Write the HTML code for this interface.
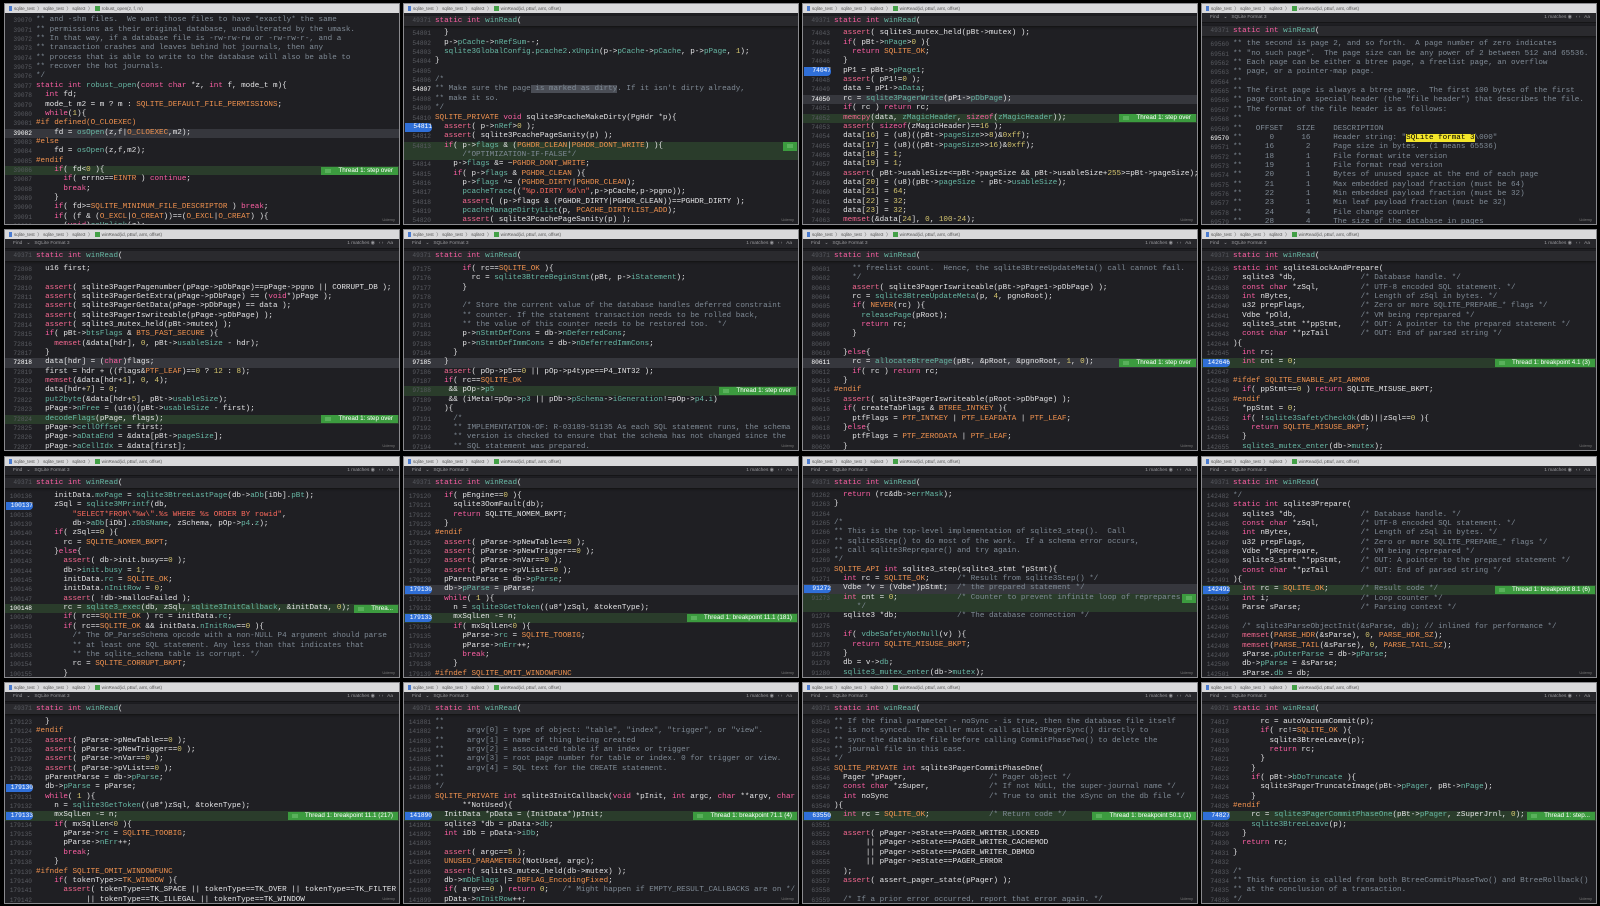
<!DOCTYPE html>
<html><head><meta charset="utf-8">
<style>
*{margin:0;padding:0;box-sizing:border-box}
html,body{width:1600px;height:906px;background:#000;overflow:hidden}
.p{position:absolute;width:396px;height:222px;background:#1f1f23;border:1px solid #8a8a8e;overflow:hidden;font-family:"Liberation Mono",monospace;font-size:7.6px;color:#e2e2e4}
.tb{position:absolute;left:0;right:0;top:0;height:9px;background:#d9d9db;font:4.6px "Liberation Sans",sans-serif;color:#555;line-height:9px;padding-left:4px;white-space:pre}
.tb b{display:inline-block;width:5px;height:5px;background:#43a047;vertical-align:middle;margin:0 2px}
.tb u{text-decoration:none;display:inline-block;width:3px;height:5px;background:#4a7bd0;vertical-align:middle;margin-right:2px}
.fd{position:absolute;left:0;right:0;top:9px;height:10px;background:#26262a;border-bottom:1px solid #151517;font:4.8px "Liberation Sans",sans-serif;color:#9a9a9e;line-height:10px;padding-left:8px;white-space:pre}
.fd span{position:absolute;right:6px;top:0}
.st{position:absolute;left:0;right:0;height:10px;background:#2a2a2e;line-height:10px;padding-left:31px;white-space:pre;z-index:2;box-shadow:0 1px 2px #111}
.st i{position:absolute;left:0;width:27px;text-align:right;font-style:normal;color:#55575d;font-size:6.2px}
.cd{position:absolute;left:0;right:0}
.l{position:relative;height:9.36px;line-height:9.36px;white-space:pre;padding-left:31px}
.l i{position:absolute;left:0;top:0;width:27px;text-align:right;font-style:normal;color:#585a60;font-size:6.2px}
.g{background:#2a3c2b}
.y{background:#36373d}
.y i{color:#fff}
.bl i{background:#2f6fd8;color:#fff;border-radius:0 4px 4px 0;left:1px;width:27px;height:8.5px;line-height:8.5px;top:.4px}
.bd{position:absolute;right:1px;top:.5px;height:8.4px;line-height:8.4px;background:#3c9b3f;color:#fff;font:6.3px "Liberation Sans",sans-serif;padding:0 5px 0 17px}
.bd:before{content:"";position:absolute;left:4px;top:2.2px;width:6px;height:4px;background:#6cc06e;opacity:.6}
.ud{position:absolute;right:4px;bottom:2px;font:4px "Liberation Sans",sans-serif;color:#777}
.k{color:#fc5fa3}.c{color:#7f8a95}.f{color:#67b7a4}.m{color:#f0924f}.n{color:#d6c66f}.s{color:#fc6a5d}.a{color:#f2678f}
.hl{background:#f4e62a;color:#000}.sel{background:#4a4d55}
</style></head><body>

<!-- ROW 1 -->
<div class="p" style="left:4px;top:3px">
<div class="tb"><u></u>sqlite_test  〉 sqlite_test  〉 sqlite3  〉<b></b>robust_open(z, f, m)</div>
<div class="cd" style="top:12.3px">
<div class="l c"><i>39070</i>** and -shm files.  We want those files to have *exactly* the same</div>
<div class="l c"><i>39071</i>** permissions as their original database, unadulterated by the umask.</div>
<div class="l c"><i>39072</i>** In that way, if a database file is -rw-rw-rw or -rw-rw-r-, and a</div>
<div class="l c"><i>39073</i>** transaction crashes and leaves behind hot journals, then any</div>
<div class="l c"><i>39074</i>** process that is able to write to the database will also be able to</div>
<div class="l c"><i>39075</i>** recover the hot journals.</div>
<div class="l c"><i>39076</i>*/</div>
<div class="l"><i>39077</i><span class="k">static int</span> <span class="f">robust_open</span>(<span class="k">const char</span> *z, <span class="k">int</span> f, mode_t m){</div>
<div class="l"><i>39078</i>  <span class="k">int</span> fd;</div>
<div class="l"><i>39079</i>  mode_t m2 = m ? m : <span class="m">SQLITE_DEFAULT_FILE_PERMISSIONS</span>;</div>
<div class="l"><i>39080</i>  <span class="k">while</span>(<span class="n">1</span>){</div>
<div class="l"><i>39081</i><span class="m">#if defined(O_CLOEXEC)</span></div>
<div class="l y"><i>39082</i>    fd = <span class="f">osOpen</span>(z,f|<span class="m">O_CLOEXEC</span>,m2);</div>
<div class="l"><i>39083</i><span class="m">#else</span></div>
<div class="l"><i>39084</i>    fd = <span class="f">osOpen</span>(z,f,m2);</div>
<div class="l"><i>39085</i><span class="m">#endif</span></div>
<div class="l g"><i>39086</i>    <span class="k">if</span>( fd&lt;<span class="n">0</span> ){<span class="bd">Thread 1: step over</span></div>
<div class="l"><i>39087</i>      <span class="k">if</span>( errno==<span class="m">EINTR</span> ) <span class="k">continue</span>;</div>
<div class="l"><i>39088</i>      <span class="k">break</span>;</div>
<div class="l"><i>39089</i>    }</div>
<div class="l"><i>39090</i>    <span class="k">if</span>( fd&gt;=<span class="m">SQLITE_MINIMUM_FILE_DESCRIPTOR</span> ) <span class="k">break</span>;</div>
<div class="l"><i>39091</i>    <span class="k">if</span>( (f &amp; (<span class="m">O_EXCL</span>|<span class="m">O_CREAT</span>))==(<span class="m">O_EXCL</span>|<span class="m">O_CREAT</span>) ){</div>
<div class="l"><i>39092</i>      (<span class="k">void</span>)<span class="f">osUnlink</span>(z);</div>
</div><div class="ud">Udemy</div></div>

<div class="p" style="left:403px;top:3px">
<div class="tb"><u></u>sqlite_test  〉 sqlite_test  〉 sqlite3  〉<b></b>winRead(id, pBuf, amt, offset)</div>
<div class="st" style="top:12px"><i>49371</i><span class="k">static int</span> <span class="f">winRead</span>(</div>
<div class="cd" style="top:25.3px">
<div class="l"><i>54801</i>  }</div>
<div class="l"><i>54802</i>  p-&gt;<span class="f">pCache</span>-&gt;<span class="f">nRefSum</span>--;</div>
<div class="l"><i>54803</i>  <span class="f">sqlite3GlobalConfig</span>.<span class="f">pcache2</span>.<span class="f">xUnpin</span>(p-&gt;<span class="f">pCache</span>-&gt;<span class="f">pCache</span>, p-&gt;<span class="f">pPage</span>, <span class="n">1</span>);</div>
<div class="l"><i>54804</i>}</div>
<div class="l"><i>54805</i></div>
<div class="l c"><i>54806</i>/*</div>
<div class="l c"><i style="color:#fff">54807</i>** Make sure the page<span class="sel"> is marked as dirty</span>. If it isn't dirty already,</div>
<div class="l c"><i>54808</i>** make it so.</div>
<div class="l c"><i>54809</i>*/</div>
<div class="l"><i>54810</i><span class="m">SQLITE_PRIVATE</span> <span class="k">void</span> sqlite3PcacheMakeDirty(PgHdr *p){</div>
<div class="l bl"><i>54811</i>  <span class="a">assert</span>( p-&gt;<span class="f">nRef</span>&gt;<span class="n">0</span> );</div>
<div class="l"><i>54812</i>  <span class="a">assert</span>( sqlite3PcachePageSanity(p) );</div>
<div class="l g"><i>54813</i>  <span class="k">if</span>( p-&gt;<span class="f">flags</span> &amp; (<span class="m">PGHDR_CLEAN</span>|<span class="m">PGHDR_DONT_WRITE</span>) ){<span class="bd" style="padding:0 6px">&nbsp;</span></div>
<div class="l g c"><i></i>      /*OPTIMIZATION-IF-FALSE*/</div>
<div class="l"><i>54814</i>    p-&gt;<span class="f">flags</span> &amp;= ~<span class="m">PGHDR_DONT_WRITE</span>;</div>
<div class="l"><i>54815</i>    <span class="k">if</span>( p-&gt;<span class="f">flags</span> &amp; <span class="m">PGHDR_CLEAN</span> ){</div>
<div class="l"><i>54816</i>      p-&gt;<span class="f">flags</span> ^= (<span class="m">PGHDR_DIRTY</span>|<span class="m">PGHDR_CLEAN</span>);</div>
<div class="l"><i>54817</i>      <span class="f">pcacheTrace</span>((<span class="s">"%p.DIRTY %d\n"</span>,p-&gt;pCache,p-&gt;pgno));</div>
<div class="l"><i>54818</i>      <span class="a">assert</span>( (p-&gt;flags &amp; (PGHDR_DIRTY|PGHDR_CLEAN))==PGHDR_DIRTY );</div>
<div class="l"><i>54819</i>      <span class="f">pcacheManageDirtyList</span>(p, <span class="m">PCACHE_DIRTYLIST_ADD</span>);</div>
<div class="l"><i>54820</i>      <span class="a">assert</span>( sqlite3PcachePageSanity(p) );</div>
</div><div class="ud">Udemy</div></div>

<div class="p" style="left:802px;top:3px">
<div class="tb"><u></u>sqlite_test  〉 sqlite_test  〉 sqlite3  〉<b></b>winRead(id, pBuf, amt, offset)</div>
<div class="st" style="top:12px"><i>49371</i><span class="k">static int</span> <span class="f">winRead</span>(</div>
<div class="cd" style="top:25.3px">
<div class="l"><i>74043</i>  <span class="a">assert</span>( sqlite3_mutex_held(pBt-&gt;mutex) );</div>
<div class="l"><i>74044</i>  <span class="k">if</span>( pBt-&gt;<span class="f">nPage</span>&gt;<span class="n">0</span> ){</div>
<div class="l"><i>74045</i>    <span class="k">return</span> <span class="m">SQLITE_OK</span>;</div>
<div class="l"><i>74046</i>  }</div>
<div class="l bl"><i>74047</i>  pP1 = pBt-&gt;<span class="f">pPage1</span>;</div>
<div class="l"><i>74048</i>  <span class="a">assert</span>( pP1!=<span class="n">0</span> );</div>
<div class="l"><i>74049</i>  data = pP1-&gt;<span class="f">aData</span>;</div>
<div class="l y"><i>74050</i>  rc = <span class="f">sqlite3PagerWrite</span>(pP1-&gt;<span class="f">pDbPage</span>);</div>
<div class="l"><i>74051</i>  <span class="k">if</span>( rc ) <span class="k">return</span> rc;</div>
<div class="l g"><i>74052</i>  <span class="a">memcpy</span>(data, <span class="f">zMagicHeader</span>, <span class="k">sizeof</span>(<span class="f">zMagicHeader</span>));<span class="bd">Thread 1: step over</span></div>
<div class="l"><i>74053</i>  <span class="a">assert</span>( <span class="k">sizeof</span>(zMagicHeader)==<span class="n">16</span> );</div>
<div class="l"><i>74054</i>  data[<span class="n">16</span>] = (u8)((pBt-&gt;<span class="f">pageSize</span>&gt;&gt;<span class="n">8</span>)&amp;<span class="n">0xff</span>);</div>
<div class="l"><i>74055</i>  data[<span class="n">17</span>] = (u8)((pBt-&gt;<span class="f">pageSize</span>&gt;&gt;<span class="n">16</span>)&amp;<span class="n">0xff</span>);</div>
<div class="l"><i>74056</i>  data[<span class="n">18</span>] = <span class="n">1</span>;</div>
<div class="l"><i>74057</i>  data[<span class="n">19</span>] = <span class="n">1</span>;</div>
<div class="l"><i>74058</i>  <span class="a">assert</span>( pBt-&gt;usableSize&lt;=pBt-&gt;pageSize &amp;&amp; pBt-&gt;usableSize+<span class="n">255</span>&gt;=pBt-&gt;pageSize);</div>
<div class="l"><i>74059</i>  data[<span class="n">20</span>] = (u8)(pBt-&gt;<span class="f">pageSize</span> - pBt-&gt;<span class="f">usableSize</span>);</div>
<div class="l"><i>74060</i>  data[<span class="n">21</span>] = <span class="n">64</span>;</div>
<div class="l"><i>74061</i>  data[<span class="n">22</span>] = <span class="n">32</span>;</div>
<div class="l"><i>74062</i>  data[<span class="n">23</span>] = <span class="n">32</span>;</div>
<div class="l"><i>74063</i>  <span class="a">memset</span>(&amp;data[<span class="n">24</span>], <span class="n">0</span>, <span class="n">100</span>-<span class="n">24</span>);</div>
</div><div class="ud">Udemy</div></div>

<div class="p" style="left:1201px;top:3px">
<div class="tb"><u></u>sqlite_test  〉 sqlite_test  〉 sqlite3  〉<b></b>winRead(id, pBuf, amt, offset)</div>
<div class="fd">Find   ⌄   SQLite Format 3<span>1 matches ◉   ‹ ›   Aa</span></div>
<div class="st" style="top:22px"><i>49371</i><span class="k">static int</span> <span class="f">winRead</span>(</div>
<div class="cd c" style="top:36.3px">
<div class="l"><i>69560</i>** the second is page 2, and so forth.  A page number of zero indicates</div>
<div class="l"><i>69561</i>** "no such page".  The page size can be any power of 2 between 512 and 65536.</div>
<div class="l"><i>69562</i>** Each page can be either a btree page, a freelist page, an overflow</div>
<div class="l"><i>69563</i>** page, or a pointer-map page.</div>
<div class="l"><i>69564</i>**</div>
<div class="l"><i>69565</i>** The first page is always a btree page.  The first 100 bytes of the first</div>
<div class="l"><i>69566</i>** page contain a special header (the "file header") that describes the file.</div>
<div class="l"><i>69567</i>** The format of the file header is as follows:</div>
<div class="l"><i>69568</i>**</div>
<div class="l"><i>69569</i>**   OFFSET   SIZE    DESCRIPTION</div>
<div class="l"><i style="color:#fff">69570</i>**      0      16     Header string: "<span class="hl">SQLite format 3</span>\000"</div>
<div class="l"><i>69571</i>**     16       2     Page size in bytes.  (1 means 65536)</div>
<div class="l"><i>69572</i>**     18       1     File format write version</div>
<div class="l"><i>69573</i>**     19       1     File format read version</div>
<div class="l"><i>69574</i>**     20       1     Bytes of unused space at the end of each page</div>
<div class="l"><i>69575</i>**     21       1     Max embedded payload fraction (must be 64)</div>
<div class="l"><i>69576</i>**     22       1     Min embedded payload fraction (must be 32)</div>
<div class="l"><i>69577</i>**     23       1     Min leaf payload fraction (must be 32)</div>
<div class="l"><i>69578</i>**     24       4     File change counter</div>
<div class="l"><i>69579</i>**     28       4     The size of the database in pages</div>
</div><div class="ud">Udemy</div></div>

<!-- ROW 2 -->
<div class="p" style="left:4px;top:229px">
<div class="tb"><u></u>sqlite_test  〉 sqlite_test  〉 sqlite3  〉<b></b>winRead(id, pBuf, amt, offset)</div>
<div class="fd">Find   ⌄   SQLite Format 3<span>1 matches ◉   ‹ ›   Aa</span></div>
<div class="st" style="top:21px"><i>49371</i><span class="k">static int</span> <span class="f">winRead</span>(</div>
<div class="cd" style="top:34.8px">
<div class="l"><i>72808</i>  u16 first;</div>
<div class="l"><i>72809</i></div>
<div class="l"><i>72810</i>  <span class="a">assert</span>( sqlite3PagerPagenumber(pPage-&gt;pDbPage)==pPage-&gt;pgno || CORRUPT_DB );</div>
<div class="l"><i>72811</i>  <span class="a">assert</span>( sqlite3PagerGetExtra(pPage-&gt;pDbPage) == (<span class="k">void</span>*)pPage );</div>
<div class="l"><i>72812</i>  <span class="a">assert</span>( sqlite3PagerGetData(pPage-&gt;pDbPage) == data );</div>
<div class="l"><i>72813</i>  <span class="a">assert</span>( sqlite3PagerIswriteable(pPage-&gt;pDbPage) );</div>
<div class="l"><i>72814</i>  <span class="a">assert</span>( sqlite3_mutex_held(pBt-&gt;mutex) );</div>
<div class="l"><i>72815</i>  <span class="k">if</span>( pBt-&gt;<span class="f">btsFlags</span> &amp; <span class="m">BTS_FAST_SECURE</span> ){</div>
<div class="l"><i>72816</i>    <span class="a">memset</span>(&amp;data[hdr], <span class="n">0</span>, pBt-&gt;<span class="f">usableSize</span> - hdr);</div>
<div class="l"><i>72817</i>  }</div>
<div class="l y"><i>72818</i>  data[hdr] = (<span class="k">char</span>)flags;</div>
<div class="l"><i>72819</i>  first = hdr + ((flags&amp;<span class="m">PTF_LEAF</span>)==<span class="n">0</span> ? <span class="n">12</span> : <span class="n">8</span>);</div>
<div class="l"><i>72820</i>  <span class="a">memset</span>(&amp;data[hdr+<span class="n">1</span>], <span class="n">0</span>, <span class="n">4</span>);</div>
<div class="l"><i>72821</i>  data[hdr+<span class="n">7</span>] = <span class="n">0</span>;</div>
<div class="l"><i>72822</i>  <span class="f">put2byte</span>(&amp;data[hdr+<span class="n">5</span>], pBt-&gt;<span class="f">usableSize</span>);</div>
<div class="l"><i>72823</i>  pPage-&gt;<span class="f">nFree</span> = (u16)(pBt-&gt;<span class="f">usableSize</span> - first);</div>
<div class="l g"><i>72824</i>  <span class="f">decodeFlags</span>(pPage, flags);<span class="bd">Thread 1: step over</span></div>
<div class="l"><i>72825</i>  pPage-&gt;<span class="f">cellOffset</span> = first;</div>
<div class="l"><i>72826</i>  pPage-&gt;<span class="f">aDataEnd</span> = &amp;data[pBt-&gt;<span class="f">pageSize</span>];</div>
<div class="l"><i>72827</i>  pPage-&gt;<span class="f">aCellIdx</span> = &amp;data[first];</div>
</div><div class="ud">Udemy</div></div>

<div class="p" style="left:403px;top:229px">
<div class="tb"><u></u>sqlite_test  〉 sqlite_test  〉 sqlite3  〉<b></b>winRead(id, pBuf, amt, offset)</div>
<div class="fd">Find   ⌄   SQLite Format 3<span>1 matches ◉   ‹ ›   Aa</span></div>
<div class="st" style="top:21px"><i>49371</i><span class="k">static int</span> <span class="f">winRead</span>(</div>
<div class="cd" style="top:34.8px">
<div class="l"><i>97175</i>      <span class="k">if</span>( rc==<span class="m">SQLITE_OK</span> ){</div>
<div class="l"><i>97176</i>        rc = <span class="f">sqlite3BtreeBeginStmt</span>(pBt, p-&gt;<span class="f">iStatement</span>);</div>
<div class="l"><i>97177</i>      }</div>
<div class="l"><i>97178</i></div>
<div class="l c"><i>97179</i>      /* Store the current value of the database handles deferred constraint</div>
<div class="l c"><i>97180</i>      ** counter. If the statement transaction needs to be rolled back,</div>
<div class="l c"><i>97181</i>      ** the value of this counter needs to be restored too.  */</div>
<div class="l"><i>97182</i>      p-&gt;<span class="f">nStmtDefCons</span> = db-&gt;<span class="f">nDeferredCons</span>;</div>
<div class="l"><i>97183</i>      p-&gt;<span class="f">nStmtDefImmCons</span> = db-&gt;<span class="f">nDeferredImmCons</span>;</div>
<div class="l"><i>97184</i>    }</div>
<div class="l y"><i>97185</i>  }</div>
<div class="l"><i>97186</i>  <span class="a">assert</span>( pOp-&gt;p5==<span class="n">0</span> || pOp-&gt;p4type==P4_INT32 );</div>
<div class="l"><i>97187</i>  <span class="k">if</span>( rc==<span class="m">SQLITE_OK</span></div>
<div class="l g"><i>97188</i>   &amp;&amp; pOp-&gt;<span class="f">p5</span><span class="bd" style="right:2px">Thread 1: step over</span></div>
<div class="l"><i>97189</i>   &amp;&amp; (iMeta!=pOp-&gt;<span class="f">p3</span> || pDb-&gt;<span class="f">pSchema</span>-&gt;<span class="f">iGeneration</span>!=pOp-&gt;<span class="f">p4</span>.<span class="f">i</span>)</div>
<div class="l"><i>97190</i>  ){</div>
<div class="l c"><i>97191</i>    /*</div>
<div class="l c"><i>97192</i>    ** IMPLEMENTATION-OF: R-03189-51135 As each SQL statement runs, the schema</div>
<div class="l c"><i>97193</i>    ** version is checked to ensure that the schema has not changed since the</div>
<div class="l c"><i>97194</i>    ** SQL statement was prepared.</div>
</div><div class="ud">Udemy</div></div>

<div class="p" style="left:802px;top:229px">
<div class="tb"><u></u>sqlite_test  〉 sqlite_test  〉 sqlite3  〉<b></b>winRead(id, pBuf, amt, offset)</div>
<div class="fd">Find   ⌄   SQLite Format 3<span>1 matches ◉   ‹ ›   Aa</span></div>
<div class="st" style="top:21px"><i>49371</i><span class="k">static int</span> <span class="f">winRead</span>(</div>
<div class="cd" style="top:34.8px">
<div class="l c"><i>80601</i>    ** freelist count.  Hence, the sqlite3BtreeUpdateMeta() call cannot fail.</div>
<div class="l c"><i>80602</i>    */</div>
<div class="l"><i>80603</i>    <span class="a">assert</span>( sqlite3PagerIswriteable(pBt-&gt;pPage1-&gt;pDbPage) );</div>
<div class="l"><i>80604</i>    rc = <span class="f">sqlite3BtreeUpdateMeta</span>(p, <span class="n">4</span>, pgnoRoot);</div>
<div class="l"><i>80605</i>    <span class="k">if</span>( <span class="m">NEVER</span>(rc) ){</div>
<div class="l"><i>80606</i>      <span class="f">releasePage</span>(pRoot);</div>
<div class="l"><i>80607</i>      <span class="k">return</span> rc;</div>
<div class="l"><i>80608</i>    }</div>
<div class="l"><i>80609</i></div>
<div class="l"><i>80610</i>  }<span class="k">else</span>{</div>
<div class="l y"><i>80611</i>    rc = <span class="f">allocateBtreePage</span>(pBt, &amp;pRoot, &amp;pgnoRoot, <span class="n">1</span>, <span class="n">0</span>);<span class="bd">Thread 1: step over</span></div>
<div class="l"><i>80612</i>    <span class="k">if</span>( rc ) <span class="k">return</span> rc;</div>
<div class="l"><i>80613</i>  }</div>
<div class="l"><i>80614</i><span class="m">#endif</span></div>
<div class="l"><i>80615</i>  <span class="a">assert</span>( sqlite3PagerIswriteable(pRoot-&gt;pDbPage) );</div>
<div class="l"><i>80616</i>  <span class="k">if</span>( createTabFlags &amp; <span class="m">BTREE_INTKEY</span> ){</div>
<div class="l"><i>80617</i>    ptfFlags = <span class="m">PTF_INTKEY</span> | <span class="m">PTF_LEAFDATA</span> | <span class="m">PTF_LEAF</span>;</div>
<div class="l"><i>80618</i>  }<span class="k">else</span>{</div>
<div class="l"><i>80619</i>    ptfFlags = <span class="m">PTF_ZERODATA</span> | <span class="m">PTF_LEAF</span>;</div>
<div class="l"><i>80620</i>  }</div>
</div><div class="ud">Udemy</div></div>

<div class="p" style="left:1201px;top:229px">
<div class="tb"><u></u>sqlite_test  〉 sqlite_test  〉 sqlite3  〉<b></b>winRead(id, pBuf, amt, offset)</div>
<div class="fd">Find   ⌄   SQLite Format 3<span>1 matches ◉   ‹ ›   Aa</span></div>
<div class="st" style="top:21px"><i>49371</i><span class="k">static int</span> <span class="f">winRead</span>(</div>
<div class="cd" style="top:34.8px">
<div class="l"><i>142636</i><span class="k">static int</span> sqlite3LockAndPrepare(</div>
<div class="l"><i>142637</i>  sqlite3 *db,              <span class="c">/* Database handle. */</span></div>
<div class="l"><i>142638</i>  <span class="k">const char</span> *zSql,         <span class="c">/* UTF-8 encoded SQL statement. */</span></div>
<div class="l"><i>142639</i>  <span class="k">int</span> nBytes,               <span class="c">/* Length of zSql in bytes. */</span></div>
<div class="l"><i>142640</i>  u32 prepFlags,            <span class="c">/* Zero or more SQLITE_PREPARE_* flags */</span></div>
<div class="l"><i>142641</i>  Vdbe *pOld,               <span class="c">/* VM being reprepared */</span></div>
<div class="l"><i>142642</i>  sqlite3_stmt **ppStmt,    <span class="c">/* OUT: A pointer to the prepared statement */</span></div>
<div class="l"><i>142643</i>  <span class="k">const char</span> **pzTail       <span class="c">/* OUT: End of parsed string */</span></div>
<div class="l"><i>142644</i>){</div>
<div class="l"><i>142645</i>  <span class="k">int</span> rc;</div>
<div class="l g bl"><i>142646</i>  <span class="k">int</span> cnt = <span class="n">0</span>;<span class="bd">Thread 1: breakpoint 4.1 (3)</span></div>
<div class="l"><i>142647</i></div>
<div class="l"><i>142648</i><span class="m">#ifdef SQLITE_ENABLE_API_ARMOR</span></div>
<div class="l"><i>142649</i>  <span class="k">if</span>( ppStmt==<span class="n">0</span> ) <span class="k">return</span> SQLITE_MISUSE_BKPT;</div>
<div class="l"><i>142650</i><span class="m">#endif</span></div>
<div class="l"><i>142651</i>  *ppStmt = <span class="n">0</span>;</div>
<div class="l"><i>142652</i>  <span class="k">if</span>( !<span class="f">sqlite3SafetyCheckOk</span>(db)||zSql==<span class="n">0</span> ){</div>
<div class="l"><i>142653</i>    <span class="k">return</span> <span class="m">SQLITE_MISUSE_BKPT</span>;</div>
<div class="l"><i>142654</i>  }</div>
<div class="l"><i>142655</i>  <span class="f">sqlite3_mutex_enter</span>(db-&gt;<span class="f">mutex</span>);</div>
</div><div class="ud">Udemy</div></div>

<!-- ROW 3 -->
<div class="p" style="left:4px;top:456px">
<div class="tb"><u></u>sqlite_test  〉 sqlite_test  〉 sqlite3  〉<b></b>winRead(id, pBuf, amt, offset)</div>
<div class="fd">Find   ⌄   SQLite Format 3<span>1 matches ◉   ‹ ›   Aa</span></div>
<div class="st" style="top:21px"><i>49371</i><span class="k">static int</span> <span class="f">winRead</span>(</div>
<div class="cd" style="top:34.8px">
<div class="l"><i>100136</i>    initData.<span class="f">mxPage</span> = <span class="f">sqlite3BtreeLastPage</span>(db-&gt;<span class="f">aDb</span>[iDb].<span class="f">pBt</span>);</div>
<div class="l bl"><i>100137</i>    zSql = <span class="f">sqlite3MPrintf</span>(db,</div>
<div class="l"><i>100138</i>        <span class="s">"SELECT*FROM\"%w\".%s WHERE %s ORDER BY rowid"</span>,</div>
<div class="l"><i>100139</i>        db-&gt;<span class="f">aDb</span>[iDb].<span class="f">zDbSName</span>, zSchema, pOp-&gt;<span class="f">p4</span>.<span class="f">z</span>);</div>
<div class="l"><i>100140</i>    <span class="k">if</span>( zSql==<span class="n">0</span> ){</div>
<div class="l"><i>100141</i>      rc = <span class="m">SQLITE_NOMEM_BKPT</span>;</div>
<div class="l"><i>100142</i>    }<span class="k">else</span>{</div>
<div class="l"><i>100143</i>      <span class="a">assert</span>( db-&gt;init.busy==<span class="n">0</span> );</div>
<div class="l"><i>100144</i>      db-&gt;<span class="f">init</span>.<span class="f">busy</span> = <span class="n">1</span>;</div>
<div class="l"><i>100145</i>      initData.<span class="f">rc</span> = <span class="m">SQLITE_OK</span>;</div>
<div class="l"><i>100146</i>      initData.<span class="f">nInitRow</span> = <span class="n">0</span>;</div>
<div class="l"><i>100147</i>      <span class="a">assert</span>( !db-&gt;mallocFailed );</div>
<div class="l g"><i style="color:#fff">100148</i>      rc = <span class="f">sqlite3_exec</span>(db, zSql, <span class="f">sqlite3InitCallback</span>, &amp;initData, <span class="n">0</span>);<span class="bd">Threa...</span></div>
<div class="l"><i>100149</i>      <span class="k">if</span>( rc==<span class="m">SQLITE_OK</span> ) rc = initData.<span class="f">rc</span>;</div>
<div class="l"><i>100150</i>      <span class="k">if</span>( rc==<span class="m">SQLITE_OK</span> &amp;&amp; initData.<span class="f">nInitRow</span>==<span class="n">0</span> ){</div>
<div class="l c"><i>100151</i>        /* The OP_ParseSchema opcode with a non-NULL P4 argument should parse</div>
<div class="l c"><i>100152</i>        ** at least one SQL statement. Any less than that indicates that</div>
<div class="l c"><i>100153</i>        ** the sqlite_schema table is corrupt. */</div>
<div class="l"><i>100154</i>        rc = <span class="m">SQLITE_CORRUPT_BKPT</span>;</div>
<div class="l"><i>100155</i>      }</div>
</div><div class="ud">Udemy</div></div>

<div class="p" style="left:403px;top:456px">
<div class="tb"><u></u>sqlite_test  〉 sqlite_test  〉 sqlite3  〉<b></b>winRead(id, pBuf, amt, offset)</div>
<div class="fd">Find   ⌄   SQLite Format 3<span>1 matches ◉   ‹ ›   Aa</span></div>
<div class="st" style="top:21px"><i>49371</i><span class="k">static int</span> <span class="f">winRead</span>(</div>
<div class="cd" style="top:34.8px">
<div class="l"><i>179120</i>  <span class="k">if</span>( pEngine==<span class="n">0</span> ){</div>
<div class="l"><i>179121</i>    sqlite3OomFault(db);</div>
<div class="l"><i>179122</i>    <span class="k">return</span> SQLITE_NOMEM_BKPT;</div>
<div class="l"><i>179123</i>  }</div>
<div class="l"><i>179124</i><span class="m">#endif</span></div>
<div class="l"><i>179125</i>  <span class="a">assert</span>( pParse-&gt;pNewTable==<span class="n">0</span> );</div>
<div class="l"><i>179126</i>  <span class="a">assert</span>( pParse-&gt;pNewTrigger==<span class="n">0</span> );</div>
<div class="l"><i>179127</i>  <span class="a">assert</span>( pParse-&gt;nVar==<span class="n">0</span> );</div>
<div class="l"><i>179128</i>  <span class="a">assert</span>( pParse-&gt;pVList==<span class="n">0</span> );</div>
<div class="l"><i>179129</i>  pParentParse = db-&gt;<span class="f">pParse</span>;</div>
<div class="l y bl"><i>179130</i>  db-&gt;<span class="f">pParse</span> = pParse;</div>
<div class="l"><i>179131</i>  <span class="k">while</span>( <span class="n">1</span> ){</div>
<div class="l"><i>179132</i>    n = <span class="f">sqlite3GetToken</span>((u8*)zSql, &amp;tokenType);</div>
<div class="l g bl"><i>179133</i>    mxSqlLen -= n;<span class="bd">Thread 1: breakpoint 11.1 (181)</span></div>
<div class="l"><i>179134</i>    <span class="k">if</span>( mxSqlLen&lt;<span class="n">0</span> ){</div>
<div class="l"><i>179135</i>      pParse-&gt;<span class="f">rc</span> = <span class="m">SQLITE_TOOBIG</span>;</div>
<div class="l"><i>179136</i>      pParse-&gt;<span class="f">nErr</span>++;</div>
<div class="l"><i>179137</i>      <span class="k">break</span>;</div>
<div class="l"><i>179138</i>    }</div>
<div class="l"><i>179139</i><span class="m">#ifndef SQLITE_OMIT_WINDOWFUNC</span></div>
</div><div class="ud">Udemy</div></div>

<div class="p" style="left:802px;top:456px">
<div class="tb"><u></u>sqlite_test  〉 sqlite_test  〉 sqlite3  〉<b></b>winRead(id, pBuf, amt, offset)</div>
<div class="fd">Find   ⌄   SQLite Format 3<span>1 matches ◉   ‹ ›   Aa</span></div>
<div class="st" style="top:21px"><i>49371</i><span class="k">static int</span> <span class="f">winRead</span>(</div>
<div class="cd" style="top:33.8px">
<div class="l"><i>91262</i>  <span class="k">return</span> (rc&amp;db-&gt;<span class="f">errMask</span>);</div>
<div class="l"><i>91263</i>}</div>
<div class="l"><i>91264</i></div>
<div class="l c"><i>91265</i>/*</div>
<div class="l c"><i>91266</i>** This is the top-level implementation of sqlite3_step().  Call</div>
<div class="l c"><i>91267</i>** sqlite3Step() to do most of the work.  If a schema error occurs,</div>
<div class="l c"><i>91268</i>** call sqlite3Reprepare() and try again.</div>
<div class="l c"><i>91269</i>*/</div>
<div class="l"><i>91270</i><span class="m">SQLITE_API</span> <span class="k">int</span> sqlite3_step(sqlite3_stmt *pStmt){</div>
<div class="l"><i>91271</i>  <span class="k">int</span> rc = <span class="m">SQLITE_OK</span>;      <span class="c">/* Result from sqlite3Step() */</span></div>
<div class="l y bl"><i>91272</i>  Vdbe *v = (Vdbe*)pStmt;  <span class="c">/* the prepared statement */</span></div>
<div class="l g"><i>91273</i>  <span class="k">int</span> cnt = <span class="n">0</span>;             <span class="c">/* Counter to prevent infinite loop of reprepares</span><span class="bd" style="padding:0 6px">&nbsp;</span></div>
<div class="l g c"><i></i>     */</div>
<div class="l"><i>91274</i>  sqlite3 *db;             <span class="c">/* The database connection */</span></div>
<div class="l"><i>91275</i></div>
<div class="l"><i>91276</i>  <span class="k">if</span>( <span class="f">vdbeSafetyNotNull</span>(v) ){</div>
<div class="l"><i>91277</i>    <span class="k">return</span> <span class="m">SQLITE_MISUSE_BKPT</span>;</div>
<div class="l"><i>91278</i>  }</div>
<div class="l"><i>91279</i>  db = v-&gt;<span class="f">db</span>;</div>
<div class="l"><i>91280</i>  <span class="f">sqlite3_mutex_enter</span>(db-&gt;<span class="f">mutex</span>);</div>
</div><div class="ud">Udemy</div></div>

<div class="p" style="left:1201px;top:456px">
<div class="tb"><u></u>sqlite_test  〉 sqlite_test  〉 sqlite3  〉<b></b>winRead(id, pBuf, amt, offset)</div>
<div class="fd">Find   ⌄   SQLite Format 3<span>1 matches ◉   ‹ ›   Aa</span></div>
<div class="st" style="top:21px"><i>49371</i><span class="k">static int</span> <span class="f">winRead</span>(</div>
<div class="cd" style="top:34.8px">
<div class="l c"><i>142482</i>*/</div>
<div class="l"><i>142483</i><span class="k">static int</span> sqlite3Prepare(</div>
<div class="l"><i>142484</i>  sqlite3 *db,              <span class="c">/* Database handle. */</span></div>
<div class="l"><i>142485</i>  <span class="k">const char</span> *zSql,         <span class="c">/* UTF-8 encoded SQL statement. */</span></div>
<div class="l"><i>142486</i>  <span class="k">int</span> nBytes,               <span class="c">/* Length of zSql in bytes. */</span></div>
<div class="l"><i>142487</i>  u32 prepFlags,            <span class="c">/* Zero or more SQLITE_PREPARE_* flags */</span></div>
<div class="l"><i>142488</i>  Vdbe *pReprepare,         <span class="c">/* VM being reprepared */</span></div>
<div class="l"><i>142489</i>  sqlite3_stmt **ppStmt,    <span class="c">/* OUT: A pointer to the prepared statement */</span></div>
<div class="l"><i>142490</i>  <span class="k">const char</span> **pzTail       <span class="c">/* OUT: End of parsed string */</span></div>
<div class="l"><i>142491</i>){</div>
<div class="l g bl"><i>142492</i>  <span class="k">int</span> rc = <span class="m">SQLITE_OK</span>;       <span class="c">/* Result code */</span><span class="bd">Thread 1: breakpoint 8.1 (6)</span></div>
<div class="l"><i>142493</i>  <span class="k">int</span> i;                    <span class="c">/* Loop counter */</span></div>
<div class="l"><i>142494</i>  Parse sParse;             <span class="c">/* Parsing context */</span></div>
<div class="l"><i>142495</i></div>
<div class="l c"><i>142496</i>  /* sqlite3ParseObjectInit(&amp;sParse, db); // inlined for performance */</div>
<div class="l"><i>142497</i>  <span class="a">memset</span>(<span class="m">PARSE_HDR</span>(&amp;sParse), <span class="n">0</span>, <span class="m">PARSE_HDR_SZ</span>);</div>
<div class="l"><i>142498</i>  <span class="a">memset</span>(<span class="m">PARSE_TAIL</span>(&amp;sParse), <span class="n">0</span>, <span class="m">PARSE_TAIL_SZ</span>);</div>
<div class="l"><i>142499</i>  sParse.<span class="f">pOuterParse</span> = db-&gt;<span class="f">pParse</span>;</div>
<div class="l"><i>142500</i>  db-&gt;<span class="f">pParse</span> = &amp;sParse;</div>
<div class="l"><i>142501</i>  sParse.<span class="f">db</span> = db;</div>
</div><div class="ud">Udemy</div></div>

<!-- ROW 4 -->
<div class="p" style="left:4px;top:682px">
<div class="tb"><u></u>sqlite_test  〉 sqlite_test  〉 sqlite3  〉<b></b>winRead(id, pBuf, amt, offset)</div>
<div class="fd">Find   ⌄   SQLite Format 3<span>1 matches ◉   ‹ ›   Aa</span></div>
<div class="st" style="top:21px"><i>49371</i><span class="k">static int</span> <span class="f">winRead</span>(</div>
<div class="cd" style="top:34.8px">
<div class="l"><i>179123</i>  }</div>
<div class="l"><i>179124</i><span class="m">#endif</span></div>
<div class="l"><i>179125</i>  <span class="a">assert</span>( pParse-&gt;pNewTable==<span class="n">0</span> );</div>
<div class="l"><i>179126</i>  <span class="a">assert</span>( pParse-&gt;pNewTrigger==<span class="n">0</span> );</div>
<div class="l"><i>179127</i>  <span class="a">assert</span>( pParse-&gt;nVar==<span class="n">0</span> );</div>
<div class="l"><i>179128</i>  <span class="a">assert</span>( pParse-&gt;pVList==<span class="n">0</span> );</div>
<div class="l"><i>179129</i>  pParentParse = db-&gt;<span class="f">pParse</span>;</div>
<div class="l bl"><i>179130</i>  db-&gt;<span class="f">pParse</span> = pParse;</div>
<div class="l"><i>179131</i>  <span class="k">while</span>( <span class="n">1</span> ){</div>
<div class="l"><i>179132</i>    n = <span class="f">sqlite3GetToken</span>((u8*)zSql, &amp;tokenType);</div>
<div class="l g bl"><i>179133</i>    mxSqlLen -= n;<span class="bd">Thread 1: breakpoint 11.1 (217)</span></div>
<div class="l"><i>179134</i>    <span class="k">if</span>( mxSqlLen&lt;<span class="n">0</span> ){</div>
<div class="l"><i>179135</i>      pParse-&gt;<span class="f">rc</span> = <span class="m">SQLITE_TOOBIG</span>;</div>
<div class="l"><i>179136</i>      pParse-&gt;<span class="f">nErr</span>++;</div>
<div class="l"><i>179137</i>      <span class="k">break</span>;</div>
<div class="l"><i>179138</i>    }</div>
<div class="l"><i>179139</i><span class="m">#ifndef SQLITE_OMIT_WINDOWFUNC</span></div>
<div class="l"><i>179140</i>    <span class="k">if</span>( tokenType&gt;=<span class="m">TK_WINDOW</span> ){</div>
<div class="l"><i>179141</i>      <span class="a">assert</span>( tokenType==TK_SPACE || tokenType==TK_OVER || tokenType==TK_FILTER</div>
<div class="l"><i>179142</i>           || tokenType==TK_ILLEGAL || tokenType==TK_WINDOW</div>
</div><div class="ud">Udemy</div></div>

<div class="p" style="left:403px;top:682px">
<div class="tb"><u></u>sqlite_test  〉 sqlite_test  〉 sqlite3  〉<b></b>winRead(id, pBuf, amt, offset)</div>
<div class="fd">Find   ⌄   SQLite Format 3<span>1 matches ◉   ‹ ›   Aa</span></div>
<div class="st" style="top:21px"><i>49371</i><span class="k">static int</span> <span class="f">winRead</span>(</div>
<div class="cd" style="top:34.8px">
<div class="l c"><i>141881</i>**</div>
<div class="l c"><i>141882</i>**     argv[0] = type of object: "table", "index", "trigger", or "view".</div>
<div class="l c"><i>141883</i>**     argv[1] = name of thing being created</div>
<div class="l c"><i>141884</i>**     argv[2] = associated table if an index or trigger</div>
<div class="l c"><i>141885</i>**     argv[3] = root page number for table or index. 0 for trigger or view.</div>
<div class="l c"><i>141886</i>**     argv[4] = SQL text for the CREATE statement.</div>
<div class="l c"><i>141887</i>**</div>
<div class="l c"><i>141888</i>*/</div>
<div class="l"><i>141889</i><span class="m">SQLITE_PRIVATE</span> <span class="k">int</span> sqlite3InitCallback(<span class="k">void</span> *pInit, <span class="k">int</span> argc, <span class="k">char</span> **argv, <span class="k">char</span></div>
<div class="l"><i></i>      **NotUsed){</div>
<div class="l g bl"><i>141890</i>  InitData *pData = (InitData*)pInit;<span class="bd">Thread 1: breakpoint 71.1 (4)</span></div>
<div class="l"><i>141891</i>  sqlite3 *db = pData-&gt;<span class="f">db</span>;</div>
<div class="l"><i>141892</i>  <span class="k">int</span> iDb = pData-&gt;<span class="f">iDb</span>;</div>
<div class="l"><i>141893</i></div>
<div class="l"><i>141894</i>  <span class="a">assert</span>( argc==<span class="n">5</span> );</div>
<div class="l"><i>141895</i>  <span class="m">UNUSED_PARAMETER2</span>(NotUsed, argc);</div>
<div class="l"><i>141896</i>  <span class="a">assert</span>( sqlite3_mutex_held(db-&gt;mutex) );</div>
<div class="l"><i>141897</i>  db-&gt;<span class="f">mDbFlags</span> |= <span class="m">DBFLAG_EncodingFixed</span>;</div>
<div class="l"><i>141898</i>  <span class="k">if</span>( argv==<span class="n">0</span> ) <span class="k">return</span> <span class="n">0</span>;   <span class="c">/* Might happen if EMPTY_RESULT_CALLBACKS are on */</span></div>
<div class="l"><i>141899</i>  pData-&gt;<span class="f">nInitRow</span>++;</div>
</div><div class="ud">Udemy</div></div>

<div class="p" style="left:802px;top:682px">
<div class="tb"><u></u>sqlite_test  〉 sqlite_test  〉 sqlite3  〉<b></b>winRead(id, pBuf, amt, offset)</div>
<div class="fd">Find   ⌄   SQLite Format 3<span>1 matches ◉   ‹ ›   Aa</span></div>
<div class="st" style="top:21px"><i>49371</i><span class="k">static int</span> <span class="f">winRead</span>(</div>
<div class="cd" style="top:34.8px">
<div class="l c"><i>63540</i>** If the final parameter - noSync - is true, then the database file itself</div>
<div class="l c"><i>63541</i>** is not synced. The caller must call sqlite3PagerSync() directly to</div>
<div class="l c"><i>63542</i>** sync the database file before calling CommitPhaseTwo() to delete the</div>
<div class="l c"><i>63543</i>** journal file in this case.</div>
<div class="l c"><i>63544</i>*/</div>
<div class="l"><i>63545</i><span class="m">SQLITE_PRIVATE</span> <span class="k">int</span> sqlite3PagerCommitPhaseOne(</div>
<div class="l"><i>63546</i>  Pager *pPager,                  <span class="c">/* Pager object */</span></div>
<div class="l"><i>63547</i>  <span class="k">const char</span> *zSuper,             <span class="c">/* If not NULL, the super-journal name */</span></div>
<div class="l"><i>63548</i>  <span class="k">int</span> noSync                      <span class="c">/* True to omit the xSync on the db file */</span></div>
<div class="l"><i>63549</i>){</div>
<div class="l g bl"><i>63550</i>  <span class="k">int</span> rc = <span class="m">SQLITE_OK</span>;             <span class="c">/* Return code */</span><span class="bd">Thread 1: breakpoint 50.1 (1)</span></div>
<div class="l"><i>63551</i></div>
<div class="l"><i>63552</i>  <span class="a">assert</span>( pPager-&gt;eState==PAGER_WRITER_LOCKED</div>
<div class="l"><i>63553</i>       || pPager-&gt;eState==PAGER_WRITER_CACHEMOD</div>
<div class="l"><i>63554</i>       || pPager-&gt;eState==PAGER_WRITER_DBMOD</div>
<div class="l"><i>63555</i>       || pPager-&gt;eState==PAGER_ERROR</div>
<div class="l"><i>63556</i>  );</div>
<div class="l"><i>63557</i>  <span class="a">assert</span>( assert_pager_state(pPager) );</div>
<div class="l"><i>63558</i></div>
<div class="l c"><i>63559</i>  /* If a prior error occurred, report that error again. */</div>
</div><div class="ud">Udemy</div></div>

<div class="p" style="left:1201px;top:682px">
<div class="tb"><u></u>sqlite_test  〉 sqlite_test  〉 sqlite3  〉<b></b>winRead(id, pBuf, amt, offset)</div>
<div class="fd">Find   ⌄   SQLite Format 3<span>1 matches ◉   ‹ ›   Aa</span></div>
<div class="st" style="top:21px"><i>49371</i><span class="k">static int</span> <span class="f">winRead</span>(</div>
<div class="cd" style="top:34.8px">
<div class="l"><i>74817</i>      rc = autoVacuumCommit(p);</div>
<div class="l"><i>74818</i>      <span class="k">if</span>( rc!=<span class="m">SQLITE_OK</span> ){</div>
<div class="l"><i>74819</i>        sqlite3BtreeLeave(p);</div>
<div class="l"><i>74820</i>        <span class="k">return</span> rc;</div>
<div class="l"><i>74821</i>      }</div>
<div class="l"><i>74822</i>    }</div>
<div class="l"><i>74823</i>    <span class="k">if</span>( pBt-&gt;<span class="f">bDoTruncate</span> ){</div>
<div class="l"><i>74824</i>      sqlite3PagerTruncateImage(pBt-&gt;<span class="f">pPager</span>, pBt-&gt;<span class="f">nPage</span>);</div>
<div class="l"><i>74825</i>    }</div>
<div class="l"><i>74826</i><span class="m">#endif</span></div>
<div class="l g bl"><i>74827</i>    rc = <span class="f">sqlite3PagerCommitPhaseOne</span>(pBt-&gt;<span class="f">pPager</span>, zSuperJrnl, <span class="n">0</span>);<span class="bd">Thread 1: step...</span></div>
<div class="l"><i>74828</i>    <span class="f">sqlite3BtreeLeave</span>(p);</div>
<div class="l"><i>74829</i>  }</div>
<div class="l"><i>74830</i>  <span class="k">return</span> rc;</div>
<div class="l"><i>74831</i>}</div>
<div class="l"><i>74832</i></div>
<div class="l c"><i>74833</i>/*</div>
<div class="l c"><i>74834</i>** This function is called from both BtreeCommitPhaseTwo() and BtreeRollback()</div>
<div class="l c"><i>74835</i>** at the conclusion of a transaction.</div>
<div class="l c"><i>74836</i>*/</div>
</div><div class="ud">Udemy</div></div>

</body></html>
